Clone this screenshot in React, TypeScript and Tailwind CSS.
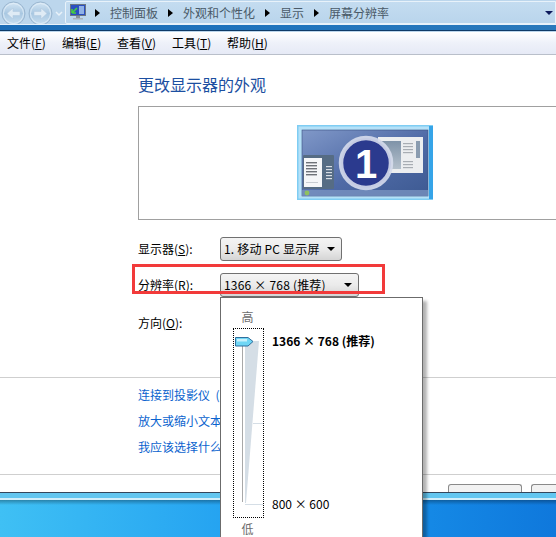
const font = { fontFamily: '"Noto Sans CJK SC", "Liberation Sans", sans-serif' };

const NavButton = ({ dir }: { dir: "left" | "right" }) => (
  <svg width="25" height="25" viewBox="0 0 25 25" className="shrink-0">
    <defs>
      <linearGradient id={`nav-${dir}`} x1="0" y1="0" x2="0" y2="1">
        <stop offset="0" stopColor="#d5e6f4" />
        <stop offset="0.5" stopColor="#a9c8e2" />
        <stop offset="1" stopColor="#c9dff0" />
      </linearGradient>
    </defs>
    <circle cx="12.5" cy="12.5" r="11.5" fill={`url(#nav-${dir})`} stroke="#9ab6d0" />
    <circle cx="12.5" cy="12.5" r="10" fill="none" stroke="#e6f1fa" strokeOpacity="0.8" />
    <path
      d={dir === "left" ? "M6 12.5 L12 7 V10.5 H19 V14.5 H12 V18 Z" : "M19 12.5 L13 7 V10.5 H6 V14.5 H13 V18 Z"}
      fill="#dfebf5"
      stroke="#b4cbe0"
      strokeWidth="0.6"
    />
  </svg>
);

const Crumb = ({ label }: { label: string }) => (
  <>
    <span className="w-0 h-0 border-y-[4px] border-y-transparent border-l-[5px] border-l-black mx-[4px]" />
    <span className="text-[12px] text-[#4a5a68] mx-[6px] whitespace-nowrap">{label}</span>
  </>
);

const TopBar = () => (
  <div className="h-[32px] bg-[#bcd6ec] relative overflow-hidden flex flex-col shrink-0">
    <div className="flex h-[24px] items-start pl-px pt-[1px]">
      <NavButton dir="left" />
      <div className="w-[2px]" />
      <NavButton dir="right" />
      <svg width="12" height="22" viewBox="0 0 12 22" className="shrink-0">
        <path d="M3 11 L6 14 L9 11" fill="none" stroke="#e9f2f9" strokeWidth="1.5" />
      </svg>
      <div className="flex-1 h-[23px] flex items-center bg-gradient-to-b from-[#c4dcf0] to-[#b9d5ec] border border-[#e8f2fa] rounded-l-[2px] pl-[3px]">
        <svg width="16" height="17" viewBox="0 0 16 17" className="shrink-0 ml-[1px] mr-[5px]">
          <rect x="0.5" y="0.5" width="15" height="11" fill="#2b4fc0" stroke="#6a7684" />
          <rect x="9" y="2" width="5" height="8" fill="#8fb1e6" />
          <path d="M2 9 L7 4 M2 9 H6 M2 9 V5" stroke="#46d03e" strokeWidth="1.6" fill="none" />
          <rect x="6" y="12" width="4" height="2" fill="#8a949e" />
          <rect x="3" y="14" width="10" height="1.5" fill="#aab2ba" />
        </svg>
        <Crumb label="控制面板" />
        <Crumb label="外观和个性化" />
        <Crumb label="显示" />
        <Crumb label="屏幕分辨率" />
        <span className="ml-auto mr-[2px] w-0 h-0 border-x-[4px] border-x-transparent border-t-[4px] border-t-[#0c1a5c]" />
      </div>
    </div>
    <div className="h-[7px] border-t border-[#e8f2fa] border-b border-b-[#0e3a66] bg-gradient-to-r from-[#1b6cb6] via-[#1f74bd] to-[#2a79bb]" />
  </div>
);

// label with an underlined access key, e.g. 文件(F)
const Mnemonic = ({ text, hotkey, tail = "" }: { text: string; hotkey: string; tail?: string }) => (
  <span className="whitespace-nowrap">
    {text}(<span className="underline underline-offset-1">{hotkey}</span>){tail}
  </span>
);

const MENU = [
  ["文件", "F"],
  ["编辑", "E"],
  ["查看", "V"],
  ["工具", "T"],
  ["帮助", "H"],
];

const MenuBar = () => (
  <div className="h-[23px] shrink-0 flex items-center gap-[16px] pl-[7px] border-b border-[#b9bfca] bg-gradient-to-b from-white via-[#eef1f9] to-[#e6eaf6] text-[12px] text-black">
    {MENU.map(([t, k]) => (
      <span key={k} className="w-[39px]">
        <Mnemonic text={t} hotkey={k} />
      </span>
    ))}
  </div>
);

const MonitorArt = () => (
  <svg width="136" height="75" viewBox="0 0 136 75">
    <defs>
      <linearGradient id="screen" x1="0" y1="0" x2="1" y2="1">
        <stop offset="0" stopColor="#8098c8" />
        <stop offset="0.55" stopColor="#4f6aa6" />
        <stop offset="1" stopColor="#3d5a92" />
      </linearGradient>
      <linearGradient id="pane" x1="0" y1="0" x2="0" y2="1">
        <stop offset="0" stopColor="#7f93a8" />
        <stop offset="1" stopColor="#b4c0cc" />
      </linearGradient>
    </defs>
    <rect x="0" y="0" width="136" height="75" fill="#7fcdf3" />
    <rect x="1.5" y="1.5" width="132" height="72" fill="#b5e1f8" />
    <rect x="132" y="1" width="4" height="73" fill="#35a4e8" />
    <rect x="5" y="5" width="126" height="66" fill="url(#screen)" stroke="#3a4f80" strokeWidth="0.6" />
    <rect x="5" y="65" width="126" height="6" fill="#7f99c4" fillOpacity="0.7" />
    <circle cx="10" cy="68" r="2.4" fill="#8fc15f" />
    <rect x="6" y="30" width="31" height="34" rx="1" fill="#566c84" />
    <rect x="7" y="33" width="18" height="29" fill="#f5f6f8" />
    {[37, 40, 43, 46, 49].map((y) => (
      <rect key={y} x="9" y={y} width="11" height="1.4" fill="#6e7278" />
    ))}
    <rect x="9" y="57" width="12" height="1" fill="#c8ccd2" />
    {[41, 44, 47, 50, 53].map((y) => (
      <rect key={y} x="29" y={y} width="6" height="1.2" fill="#d8dde4" />
    ))}
    <rect x="81" y="12" width="45" height="36" fill="#eceef0" />
    <rect x="83" y="16" width="21" height="28" fill="url(#pane)" />
    {[18, 21, 24, 27, 36, 39, 42].map((y) => (
      <rect key={y} x="106" y={y} width="10" height="1.2" fill="#a8adb3" />
    ))}
    <rect x="119" y="16" width="4" height="17" fill="#8a9cb0" />
    <circle cx="69" cy="38" r="25" fill="#2b3a8e" stroke="#d6dcec" strokeWidth="4.5" strokeOpacity="0.9" />
    <text x="69" y="53" textAnchor="middle" fontSize="40" fontWeight="700" fill="#ffffff" fontFamily="Liberation Sans, sans-serif">
      1
    </text>
  </svg>
);

const Combo = ({ label, width }: { label: string; width: string }) => (
  <div className={`h-[24px] ${width} flex items-center justify-between pl-[3px] pr-[6px] rounded-[3px] border border-[#707070] bg-gradient-to-b from-[#f4f4f4] via-[#ebebeb] to-[#d5d5d5] text-[12px] text-black whitespace-nowrap tracking-[0.2px]`}>
    <span>{label}</span>
    <span className="w-0 h-0 border-x-[4px] border-x-transparent border-t-[4px] border-t-black" />
  </div>
);

const FormRow = ({ label, hotkey, tail, children }: { label: string; hotkey: string; tail: string; children?: React.ReactNode }) => (
  <div className="flex items-center h-[24px]">
    <span className="w-[82px] text-[12px] text-black">
      <Mnemonic text={label} hotkey={hotkey} tail={tail} />
    </span>
    {children}
  </div>
);

const ResolutionPopup = () => (
  <div className="absolute left-[220px] top-[297px] w-[203px] h-[260px] bg-white border border-[#6b6b6b] shadow-[4px_4px_3px_rgba(0,0,0,0.3)] flex">
    <div className="flex flex-col w-[39px] ml-[12px] shrink-0">
      <span className="text-[12px] text-[#6d6d6d] h-[30px] pt-[10px] leading-[18px] w-[29px] text-center">高</span>
      <div className="w-[31px] h-[190px] border border-dotted border-black shrink-0">
        <svg width="29" height="188" viewBox="0 0 29 188" className="block">
          <path d="M11 12 H25 L12 174 H11 Z" fill="#d5dee6" />
          <line x1="8.5" y1="17" x2="8.5" y2="173" stroke="#a8a8a8" />
          <line x1="19" y1="94.5" x2="29" y2="94.5" stroke="#d5dee6" />
          <line x1="11" y1="175.5" x2="29" y2="175.5" stroke="#d5dee6" />
          <path d="M1.5 8.5 H14 L19 12.5 L14 17 H1.5 Z" fill="#6fd6f5" stroke="#2f6f9e" />
          <rect x="3" y="10" width="10" height="2.5" fill="#c8f0fb" />
        </svg>
      </div>
      <span className="text-[12px] text-[#6d6d6d] w-[29px] text-center leading-[18px] mt-[2px]">低</span>
    </div>
    <div className="flex flex-col flex-1 pt-[34px] text-[12px] text-black whitespace-nowrap">
      <span className="font-bold h-[18px] leading-[18px]">1366 × 768 (推荐)</span>
      <span className="mt-[145px] h-[18px] leading-[18px]">800 × 600</span>
    </div>
  </div>
);

export default function App() {
  return (
    <div className="relative w-[556px] h-[537px] overflow-hidden bg-white flex flex-col" style={font}>
      <TopBar />
      <MenuBar />
      <main className="flex-1 flex flex-col">
        <div className="pl-[138px]">
          <h1 className="mt-[18px] h-[22px] leading-[22px] text-[16px] font-normal text-[#1c4fa1]">更改显示器的外观</h1>
          <div className="mt-[11px] h-[114px] border border-r-0 border-[#a0a0a0] flex items-center justify-center">
            <div className="ml-[34px] mt-[-1px]">
              <MonitorArt />
            </div>
          </div>
          <div className="mt-[17px] flex flex-col">
            <FormRow label="显示器" hotkey="S" tail=":">
              <Combo label="1. 移动 PC 显示屏" width="w-[122px]" />
            </FormRow>
            <div className="h-[12px]" />
            <FormRow label="分辨率" hotkey="R" tail=":">
              <Combo label="1366 × 768 (推荐)" width="w-[139px]" />
            </FormRow>
            <div className="h-[14px]" />
            <FormRow label="方向" hotkey="O" tail=":" />
          </div>
        </div>
        <div className="mt-[42px] border-t border-[#cfcfcf] pl-[138px] flex flex-col gap-[8px] pt-[8px] text-[12px] text-[#0b63ce] whitespace-nowrap">
          <span className="h-[18px] leading-[18px]">连接到投影仪&nbsp;&nbsp;(或按 P)</span>
          <span className="h-[18px] leading-[18px]">放大或缩小文本和其他项目</span>
          <span className="h-[18px] leading-[18px]">我应该选择什么显示器设置?</span>
        </div>
        <div className="mt-[18px] border-t border-[#cfcfcf] flex-1 flex justify-end items-end gap-[9px]">
          <div className="w-[74px] h-[8px] border border-b-0 border-[#8a8a8a] rounded-t-[3px] bg-[#f2f2f2]" />
          <div className="w-[25px] h-[8px] border border-b-0 border-r-0 border-[#8a8a8a] rounded-tl-[3px] bg-[#f2f2f2]" />
        </div>
      </main>
      <footer className="h-[45px] shrink-0 flex flex-col">
        <div className="h-[8px] border-t border-[#33465c] bg-[#62c6f0] border-b-2 border-b-[#d0eefb]" />
        <div className="flex-1 bg-gradient-to-r from-[#3fc0f4] via-[#1e9cf0] to-[#0f78dc]">
          <div className="h-[5px] bg-gradient-to-b from-black/30 to-transparent" />
        </div>
      </footer>
      <div className="absolute left-[132px] top-[264px] w-[253px] h-[30px] border-[3px] border-[#f23a3a] pointer-events-none" />
      <ResolutionPopup />
    </div>
  );
}
